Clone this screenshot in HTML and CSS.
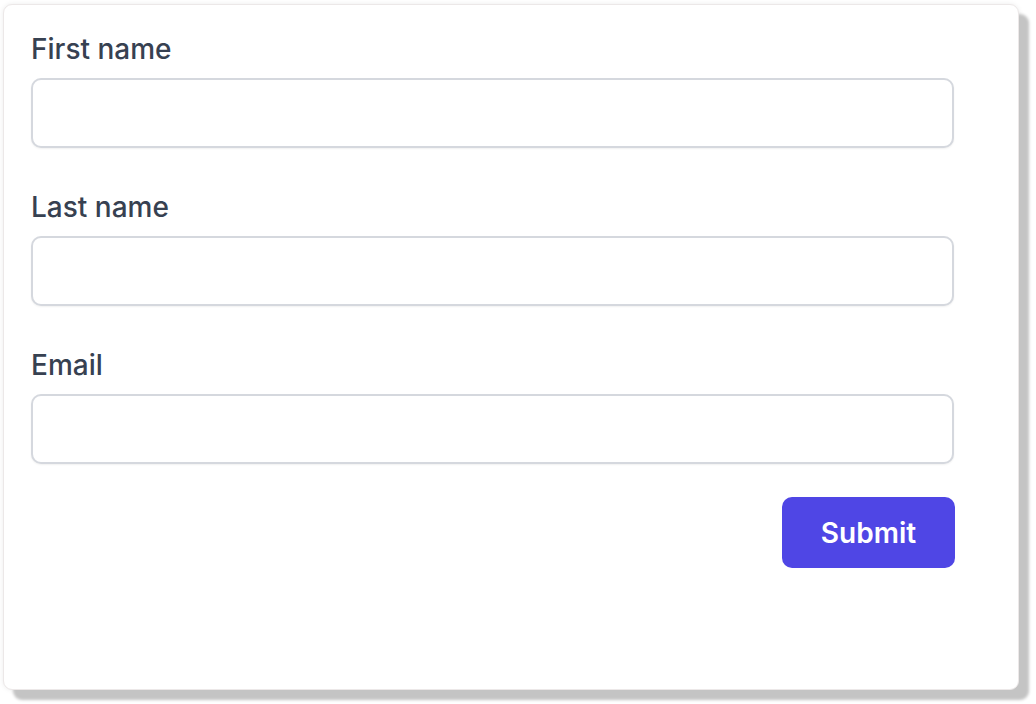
FILE: index.html
```html
<!DOCTYPE html>
<html lang="en">
<head>
<meta charset="utf-8">
<title>Form</title>
<link rel="stylesheet" href="styles.css">
</head>
<body>
<div class="card">
  <form class="form">
    <div class="field">
      <label class="label" for="first">First name</label>
      <input class="input" id="first" type="text">
    </div>
    <div class="field">
      <label class="label" for="last">Last name</label>
      <input class="input" id="last" type="text">
    </div>
    <div class="field">
      <label class="label" for="email">Email</label>
      <input class="input" id="email" type="email">
    </div>
    <div class="actions">
      <button class="button" type="button">Submit</button>
    </div>
  </form>
</div>
</body>
</html>
```

FILE: styles.css
```css
html, body {
  margin: 0;
  padding: 0;
  background: #ffffff;
}
body {
  font-family: Inter, "Liberation Sans", sans-serif;
  box-sizing: border-box;
  min-height: 704px;
  padding: 4px 0 14px 3px;
}
.card {
  box-sizing: border-box;
  width: 1016px;
  height: 686px;
  background: #ffffff;
  border-radius: 9px;
  border: 1px solid #ece8e8;
  box-shadow: 10px 10px 3px #c4c4c4, 0 0 5px rgba(0, 0, 0, 0.08);
  padding: 27px 0 0 27px;
}
.form {
  width: 923px;
  display: flex;
  flex-direction: column;
}
.field {
  display: flex;
  flex-direction: column;
  margin-bottom: 42px;
}
.field:nth-child(3) {
  margin-bottom: 33px;
}
.label {
  font-size: 28px;
  line-height: 35px;
  font-weight: 500;
  color: #374151;
  margin-bottom: 11px;
}
.input {
  box-sizing: border-box;
  height: 70px;
  width: 100%;
  border: 2px solid #d5d8de;
  border-radius: 10px;
  box-shadow: 0 1px 2px rgba(0, 0, 0, 0.06);
  background: #ffffff;
  margin: 0;
  padding: 0 20px;
  font-family: inherit;
  font-size: 28px;
}
.actions {
  display: flex;
  justify-content: flex-end;
}
.button {
  width: 173px;
  height: 71px;
  margin-right: -1px;
  background: #4f46e5;
  color: #ffffff;
  border: none;
  border-radius: 10px;
  font-family: inherit;
  font-size: 28px;
  font-weight: 600;
  padding: 0;
}
```
